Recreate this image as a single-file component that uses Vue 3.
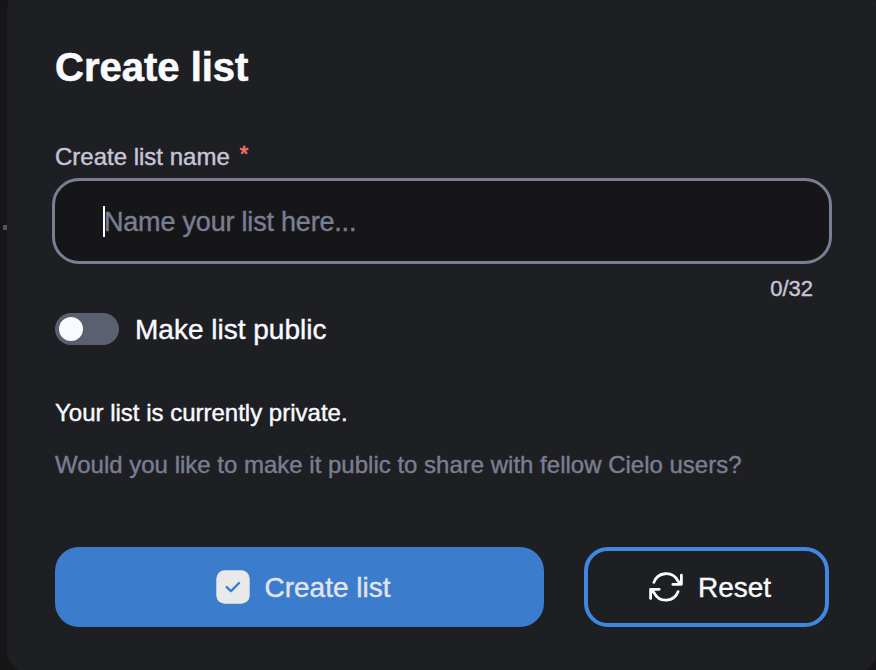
<script setup>
import { ref } from 'vue'

const maxLength = 32
const name = ref('')
const isPublic = ref(false)
</script>

<template>
  <main class="backdrop">
    <span class="speck"></span>
    <section class="modal">
      <h1 class="title">Create list</h1>
      <label class="label">Create list name <span class="required">*</span></label>
      <div class="field">
        <span class="caret"></span>
        <span class="placeholder">Name your list here...</span>
      </div>
      <div class="counter">{{ name.length }}/{{ maxLength }}</div>
      <div class="toggle-row" @click="isPublic = !isPublic">
        <span class="toggle" :class="{ on: isPublic }"><span class="knob"></span></span>
        <span class="toggle-label">Make list public</span>
      </div>
      <p class="status">Your list is currently private.</p>
      <p class="hint">Would you like to make it public to share with fellow Cielo users?</p>
      <div class="actions">
        <button class="btn primary">
          <svg class="check" viewBox="0 0 34 34">
            <rect x="0.3" y="0.3" width="33.4" height="33.4" rx="8.5" fill="#e9e9e9" />
            <path d="M10.7 17.1L15 21.1L23.1 13" fill="none" stroke="#3b7ccd" stroke-width="2.4" stroke-linecap="round" stroke-linejoin="round" />
          </svg>
          <span class="btn-text">Create list</span>
        </button>
        <button class="btn secondary">
          <svg class="refresh" viewBox="0 0 34 30" fill="none" stroke="#f9faff" stroke-width="2.8" stroke-linecap="round" stroke-linejoin="round">
            <path d="M4.9 10.4A13 13 0 0 1 28.7 8.7L32.2 12.2M32.4 3.2V12.3H23.8" />
            <path d="M29.1 19.6A13 13 0 0 1 5.3 21.1L1.8 17.6M1.6 26.4V17.3H10.2" />
          </svg>
          <span class="btn-text">Reset</span>
        </button>
      </div>
    </section>
  </main>
</template>

<style>
body {
  margin: 0;
  overflow: hidden;
  background: #161616;
}
</style>

<style scoped>
.backdrop {
  position: relative;
  box-sizing: border-box;
  width: 876px;
  height: 670px;
  padding-left: 7px;
  overflow: hidden;
  background: #161616;
  color: #f9faff;
  font-family: "Liberation Sans", Arial, sans-serif;
}
.speck {
  position: absolute;
  left: 3px;
  top: 225px;
  width: 4px;
  height: 5px;
  background: #555;
}
.modal {
  box-sizing: border-box;
  width: 870px;
  height: 688px;
  margin-top: -14px;
  padding: 58px 47px 0 48px;
  border-radius: 24px;
  background: #1e1f23;
}
.title {
  margin: 0;
  font-size: 40px;
  line-height: 46px;
  font-weight: 700;
  -webkit-text-stroke: 0.6px;
}
.label {
  display: flex;
  align-items: flex-start;
  margin-top: 53px;
  font-size: 24px;
  line-height: 28px;
  color: #c8c5d8;
  -webkit-text-stroke: 0.4px;
}
.required {
  margin-left: 10px;
  font-size: 22px;
  line-height: 22px;
  color: #f07067;
  -webkit-text-stroke: 0.7px;
}
.field {
  box-sizing: border-box;
  display: flex;
  align-items: center;
  width: 780px;
  height: 86px;
  margin: 7px 0 0 -3px;
  padding-left: 48px;
  border: 3px solid #7a7e92;
  border-radius: 27px;
  background: #161618;
}
.caret {
  width: 2px;
  height: 31px;
  margin-right: -2px;
  background: #fff;
}
.placeholder {
  padding: 2px 0 0 1px;
  font-size: 27px;
  line-height: 32px;
  letter-spacing: -0.2px;
  color: #7a7e92;
  -webkit-text-stroke: 0.4px;
}
.counter {
  margin: 12px 17px 0 0;
  font-size: 22px;
  line-height: 26px;
  text-align: right;
  color: #c8c5d8;
  -webkit-text-stroke: 0.4px;
}
.toggle-row {
  display: flex;
  align-items: center;
  gap: 16px;
  height: 32px;
  margin-top: 11px;
}
.toggle {
  box-sizing: border-box;
  display: flex;
  width: 64px;
  height: 32px;
  padding: 4px;
  border-radius: 16px;
  background: #5b6071;
}
.toggle.on {
  justify-content: flex-end;
  background: #3b7ccd;
}
.knob {
  width: 24px;
  height: 24px;
  border-radius: 50%;
  background: #f9faff;
}
.toggle-label {
  padding-top: 2px;
  font-size: 28px;
  line-height: 32px;
  -webkit-text-stroke: 0.4px;
}
.status,
.hint {
  margin: 0;
  font-size: 24px;
  line-height: 28px;
  white-space: nowrap;
  -webkit-text-stroke: 0.4px;
}
.status {
  margin-top: 54px;
}
.hint {
  margin-top: 24px;
  color: #7a7e92;
}
.actions {
  display: flex;
  gap: 40px;
  margin-top: 68px;
}
.btn {
  box-sizing: border-box;
  display: flex;
  align-items: center;
  justify-content: center;
  height: 80px;
  padding: 0;
  border: 0;
  border-radius: 24px;
  font: 28px/32px "Liberation Sans", Arial, sans-serif;
  -webkit-text-stroke: 0.4px;
}
.btn svg {
  flex: none;
}
.btn-text {
  padding-top: 2px;
}
.primary {
  width: 489px;
  gap: 14px;
  padding-right: 7px;
  padding-left: 15px;
  background: #3b7ccd;
  color: #e3e4e9;
}
.secondary {
  width: 245px;
  gap: 15px;
  padding-left: 7px;
  border: 4px solid #4087e2;
  background: transparent;
  color: #f9faff;
}
.check {
  width: 34px;
  height: 34px;
}
.refresh {
  width: 34px;
  height: 30px;
}
</style>
